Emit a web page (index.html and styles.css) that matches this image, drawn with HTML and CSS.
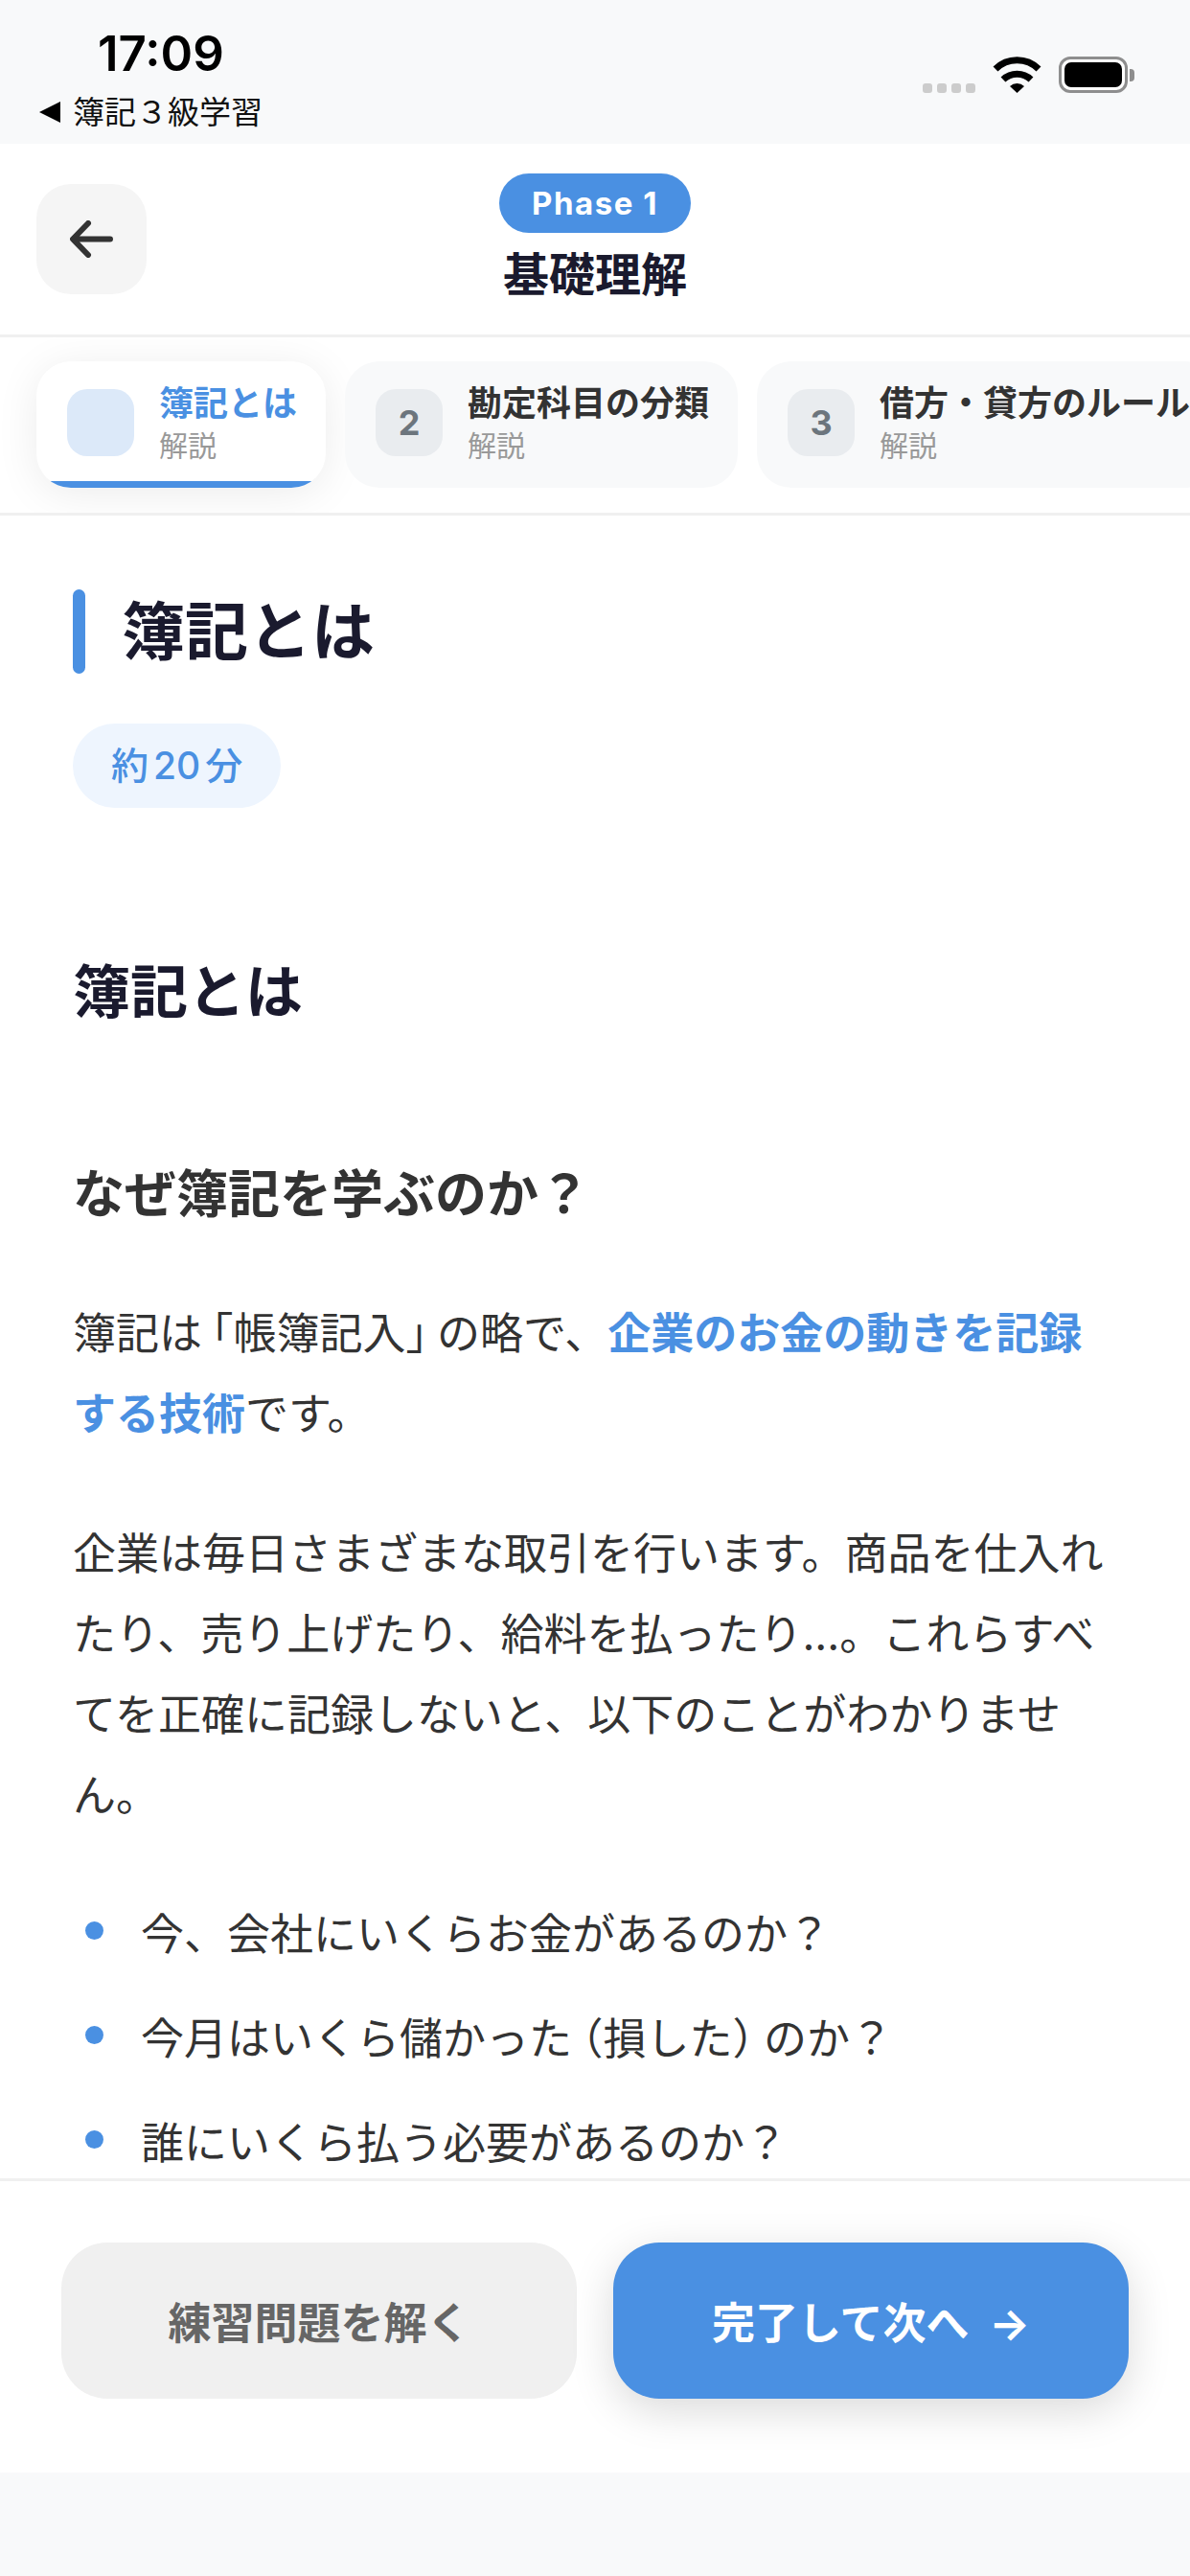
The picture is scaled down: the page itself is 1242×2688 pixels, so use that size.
FILE: index.html
```html
<!DOCTYPE html>
<html lang="ja">
<head>
  <meta charset="UTF-8">
  <title>簿記３級学習</title>
  <meta name="viewport" content="width=device-width, initial-scale=1.0">
  <link rel="stylesheet" href="styles.css">
</head>
<body>

  <div class="status">
    <div class="status-left">
      <div class="time">17:09</div>
      <div class="back-app"><span class="back-tri"></span>簿記３級学習</div>
    </div>
    <div class="status-right">
      <div class="signal"><i></i><i></i><i></i><i></i></div>
      <svg class="wifi" width="51" height="39" viewBox="0 0 51 39">
        <path d="M3 14 A32 32 0 0 1 48 14" fill="none" stroke="#000" stroke-width="7"/>
        <path d="M11 25 A21 21 0 0 1 40 25" fill="none" stroke="#000" stroke-width="7"/>
        <path d="M18 32 A11 11 0 0 1 33 32 L25.5 39 Z" fill="#000"/>
      </svg>
      <div class="battery"><div class="battery-fill"></div></div>
      <div class="battery-nub"></div>
    </div>
  </div>

  <div class="header">
    <div class="back-btn">
      <svg width="45" height="39" viewBox="0 0 45 39">
        <path d="M42 19.5 H4 M19 3 L3 19.5 L19 36" fill="none" stroke="#333" stroke-width="6" stroke-linecap="round" stroke-linejoin="round"/>
      </svg>
    </div>
    <div class="header-center">
      <span class="phase">Phase 1</span>
      <div class="header-title">基礎理解</div>
    </div>
  </div>

  <div class="tabs">
    <div class="tab active">
      <div class="tab-num"></div>
      <div>
        <div class="tab-name">簿記とは</div>
        <div class="tab-type">解説</div>
      </div>
    </div>
    <div class="tab">
      <div class="tab-num">2</div>
      <div>
        <div class="tab-name">勘定科目の分類</div>
        <div class="tab-type">解説</div>
      </div>
    </div>
    <div class="tab">
      <div class="tab-num">3</div>
      <div>
        <div class="tab-name">借方・貸方のルール</div>
        <div class="tab-type">解説</div>
      </div>
    </div>
  </div>

  <div class="content">
    <div class="lesson-head">
      <div class="lesson-bar"></div>
      <h1>簿記とは</h1>
    </div>
    <span class="duration">約<span class="num">20</span>分</span>

    <h2>簿記とは</h2>
    <h3>なぜ簿記を学ぶのか？</h3>
    <p>簿記は<span class="open">「</span>帳簿記入<span class="close">」</span>の略で、<strong>企業のお金の動きを記録する技術</strong>です。</p>
    <p>企業は毎日さまざまな取引を行います。商品を仕入れたり、売り上げたり、給料を払ったり...。これらすべてを正確に記録しないと、以下のことがわかりません。</p>
    <ul>
      <li>今、会社にいくらお金があるのか？</li>
      <li>今月はいくら儲かった<span class="open">（</span>損した<span class="close">）</span>のか？</li>
      <li>誰にいくら払う必要があるのか？</li>
    </ul>
  </div>

  <div class="footer">
    <button class="btn-sub">練習問題を解く</button>
    <button class="btn-main">完了して次へ <span class="btn-arrow">→</span></button>
  </div>

  <div class="safe-area"></div>

</body>
</html>
```

FILE: styles.css
```css
* {
  box-sizing: border-box;
}

html, body {
  margin: 0;
  height: 2688px;
}

body {
  background: #f8f9fa;
  font-family: Inter, "Noto Sans CJK JP", sans-serif;
  display: flex;
  flex-direction: column;
  overflow: hidden;
  color: #333;
}

/* status bar */
.status {
  height: 150px;
  flex: none;
  display: flex;
  justify-content: space-between;
}

.status-left {
  padding-left: 41px;
}

.time {
  font-size: 51px;
  font-weight: 600;
  line-height: 62px;
  margin-top: 25px;
  margin-left: 61px;
  color: #000;
}

.back-app {
  display: flex;
  align-items: center;
  font-size: 33px;
  line-height: 44px;
  margin-top: 8px;
  color: #111;
}

.back-tri {
  width: 0;
  height: 0;
  border-top: 11px solid transparent;
  border-bottom: 11px solid transparent;
  border-right: 22px solid #000;
  margin-right: 13px;
}

.status-right {
  display: flex;
  align-items: flex-end;
  padding: 0 58px 53px 0;
}

.signal {
  display: flex;
  gap: 5px;
  margin-right: 18px;
}

.signal i {
  width: 10px;
  height: 10px;
  border-radius: 3px;
  background: #ccc;
}

.wifi {
  margin-right: 18px;
}

.battery {
  width: 72px;
  height: 38px;
  border: 3px solid #8e8e8e;
  border-radius: 12px;
  padding: 3px;
  background: #fff;
}

.battery-fill {
  height: 100%;
  background: #000;
  border-radius: 7px;
}

.battery-nub {
  width: 5px;
  height: 13px;
  background: #8e8e8e;
  border-radius: 0 4px 4px 0;
  margin: 0 0 12px 2px;
}

/* header */
.header {
  position: relative;
  height: 202px;
  flex: none;
  background: #fff;
  border-bottom: 3px solid #f0f0f0;
  padding-top: 2px;
  display: flex;
  align-items: center;
  justify-content: center;
}

.back-btn {
  position: absolute;
  left: 38px;
  top: 42px;
  width: 115px;
  height: 115px;
  border-radius: 36px;
  background: #f5f5f5;
  display: flex;
  align-items: center;
  justify-content: center;
}

.header-center {
  display: flex;
  flex-direction: column;
  align-items: center;
}

.phase {
  background: #4a90e2;
  color: #fff;
  font-size: 33px;
  font-weight: 700;
  letter-spacing: 1.5px;
  line-height: 62px;
  padding: 0 34px;
  border-radius: 31px;
}

.header-title {
  font-size: 48px;
  font-weight: 700;
  line-height: 66px;
  margin-top: 11px;
  color: #1a1a2e;
}

/* lesson tabs */
.tabs {
  height: 186px;
  flex: none;
  background: #fff;
  border-bottom: 3px solid #f0f0f0;
  display: flex;
  gap: 20px;
  padding: 25px 0 0 38px;
  overflow: hidden;
}

.tab {
  position: relative;
  height: 132px;
  flex: none;
  display: flex;
  align-items: center;
  gap: 26px;
  padding: 0 30px 5px 32px;
  border-radius: 36px;
  background: #f8f9fa;
  overflow: hidden;
}

.tab.active {
  background: #fff;
  box-shadow: 0 6px 45px rgba(0,0,0,0.08);
}

.tab.active::after {
  content: "";
  position: absolute;
  left: 0;
  right: 0;
  bottom: 0;
  height: 7px;
  background: #4a90e2;
}

.tab-num {
  width: 70px;
  height: 70px;
  border-radius: 21px;
  background: #e9ecef;
  color: #6c757d;
  font-size: 36px;
  font-weight: 700;
  display: flex;
  align-items: center;
  justify-content: center;
}

.tab.active .tab-num {
  background: #dce9f9;
}

.tab-name {
  font-size: 36px;
  font-weight: 600;
  line-height: 46px;
  white-space: nowrap;
}

.tab.active .tab-name {
  color: #4a90e2;
}

.tab-type {
  font-size: 30px;
  line-height: 38px;
  margin-top: 2px;
  color: #999;
}

/* content */
.content {
  flex: 1;
  min-height: 0;
  overflow: hidden;
  background: #fff;
  padding: 77px 76px 0 76px;
}

.lesson-head {
  display: flex;
  align-items: center;
  gap: 38px;
}

.lesson-bar {
  width: 13px;
  height: 88px;
  border-radius: 7px;
  background: #4a90e2;
}

h1 {
  margin: 0;
  font-size: 66px;
  font-weight: 700;
  line-height: 88px;
  color: #1a1a2e;
}

.duration {
  display: inline-block;
  margin-top: 52px;
  height: 88px;
  line-height: 88px;
  padding: 0 40px;
  border-radius: 44px;
  background: #eef5fe;
  color: #4a90e2;
  font-size: 39px;
  font-weight: 500;
}

.num {
  margin: 0 5px;
}

h2 {
  margin: 150px 0 0;
  font-size: 60px;
  font-weight: 700;
  line-height: 84px;
  color: #1a1a2e;
}

h3 {
  margin: 132px 0 0;
  font-size: 54px;
  font-weight: 700;
  line-height: 76px;
}

p {
  margin: 62px 0 0;
  font-size: 45px;
  line-height: 84px;
}

h3 + p {
  margin-top: 65px;
}

strong {
  font-weight: 700;
  color: #4a90e2;
}

/* brackets sit tighter than a full em in the original */
.open {
  font-feature-settings: "halt";
  padding-left: 10px;
}

.close {
  font-feature-settings: "halt";
  padding-right: 10px;
}

ul {
  list-style: none;
  margin: 61px 0 0;
  padding: 0 0 0 71px;
}

li {
  position: relative;
  font-size: 45px;
  line-height: 84px;
  margin-bottom: 25px;
}

li::before {
  content: "";
  position: absolute;
  left: -58px;
  top: 28px;
  width: 19px;
  height: 19px;
  border-radius: 50%;
  background: #4a90e2;
}

/* bottom buttons */
.footer {
  height: 307px;
  flex: none;
  background: #fff;
  border-top: 3px solid #f0f0f0;
  display: flex;
  gap: 38px;
  padding: 64px 64px 77px;
}

.footer button {
  flex: 1;
  height: 163px;
  border: none;
  border-radius: 48px;
  font-family: inherit;
  font-size: 45px;
  font-weight: 700;
}

.btn-sub {
  background: #f0f0f0;
  color: #666;
}

.btn-main {
  background: #4a90e2;
  color: #fff;
  box-shadow: 0 12px 45px rgba(0,0,0,0.15);
}

.btn-arrow {
  margin-left: 10px;
}

.safe-area {
  height: 108px;
  flex: none;
}
```
